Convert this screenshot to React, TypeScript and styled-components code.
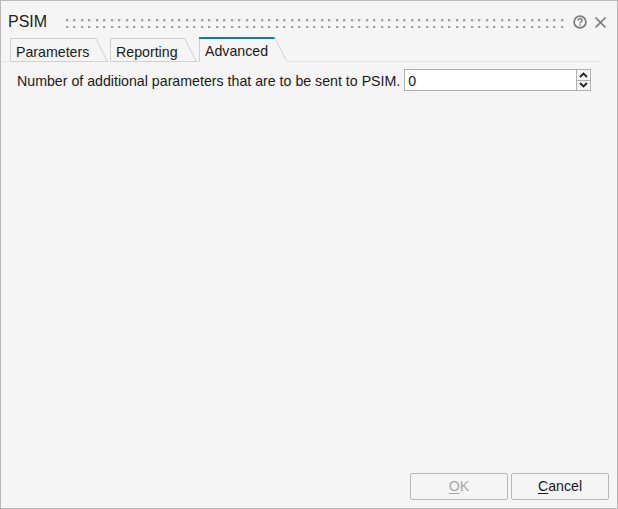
import React from 'react';
import styled, { createGlobalStyle } from 'styled-components';

const GlobalStyle = createGlobalStyle`
	html, body {
		margin: 0;
		padding: 0;
		background: #f5f5f5;
	}
`;

const Dialog = styled.div`
	box-sizing: border-box;
	width: 618px;
	height: 509px;
	display: flex;
	flex-direction: column;
	background: #f5f5f5;
	border: 1px solid #b9b9b9;
	font-family: 'Liberation Sans', Arial, sans-serif;
	font-size: 14.2px;
	color: #1a1a1a;
`;

const TitleBar = styled.div`
	height: 36px;
	display: flex;
	align-items: center;
	padding: 6px 10px 0 7px;
	box-sizing: border-box;
`;

const Title = styled.div`
	font-size: 16px;
	color: #222;
	width: 58px;
`;

const Grip = styled.div`
	flex: 1;
	height: 11px;
	margin-right: 2px;
	background-image:
		radial-gradient(circle at 1px 1px, #a0a0a0 1.3px, #c8c8c8 1.5px, transparent 1.7px),
		radial-gradient(circle at 1px 1px, #a0a0a0 1.3px, #c8c8c8 1.5px, transparent 1.7px);
	background-size: 15px 7px;
	background-position: 0 2px, 7px 2px;
`;

const IconButton = styled.button`
	border: 0;
	background: none;
	padding: 0;
	display: flex;
	margin-left: 7px;
`;

const TabStrip = styled.div`
	box-sizing: border-box;
	display: flex;
	align-items: flex-end;
	height: 25px;
	padding-left: 9px;
	border-bottom: 1px solid #e6e6e6;
	margin-right: 17px;
`;

const Tab = styled.div<{ $active?: boolean; $width: number }>`
	position: relative;
	box-sizing: border-box;
	width: ${(p) => p.$width}px;
	height: ${(p) => (p.$active ? 25 : 23)}px;
	margin-right: ${(p) => (p.$active ? 0 : 2)}px;
	margin-bottom: ${(p) => (p.$active ? -1 : 0)}px;
	padding: 6px 0 0 5px;
	border-left: 1px solid #d0d0d0;
	line-height: 16px;
	color: #1a1a1a;
	&::before {
		content: '';
		position: absolute;
		top: 0;
		left: -1px;
		right: 12px;
		border-top: ${(p) => (p.$active ? '2px solid #0b7fa5' : '1px solid #d0d0d0')};
	}
	&::after {
		content: '';
		position: absolute;
		left: 0;
		right: 0;
		bottom: ${(p) => (p.$active ? 0 : -1)}px;
		border-bottom: 1px solid ${(p) => (p.$active ? '#f5f5f5' : '#d0d0d0')};
	}
`;

const TabEdge = styled.svg`
	position: absolute;
	right: 0;
	top: 0;
	z-index: 1;
`;

const Body = styled.div`
	flex: 1;
	padding: 7px 26px 0 16px;
`;

const Row = styled.div`
	display: flex;
	align-items: center;
	height: 22px;
`;

const Label = styled.label`
	white-space: nowrap;
	margin-right: 4px;
	padding-top: 2px;
`;

const NumberField = styled.div`
	flex: 1;
	height: 22px;
	box-sizing: border-box;
	border: 1px solid #b0b0b0;
	background: #fff;
	padding-left: 3px;
	line-height: 22px;
	color: #1a1a1a;
`;

const Spinner = styled.div`
	display: flex;
	flex-direction: column;
	width: 14px;
	height: 22px;
`;

const SpinButton = styled.div`
	flex: 1;
	display: flex;
	align-items: center;
	justify-content: center;
	box-sizing: border-box;
	background: #f5f5f5;
	border: 1px solid #b0b0b0;
	border-left: 0;
	& + & {
		border-top: 0;
	}
`;

const Footer = styled.div`
	display: flex;
	justify-content: flex-end;
	gap: 3px;
	padding: 0 8px 8px 0;
`;

const Button = styled.button`
	box-sizing: border-box;
	width: 98px;
	height: 27px;
	padding: 0 0 2px;
	background: #f5f5f5;
	border: 1px solid #b9b9b9;
	border-radius: 2px;
	font: inherit;
	color: ${(p) => (p.disabled ? '#a8a8a8' : '#1a1a1a')};
	u {
		text-underline-offset: 2px;
	}
`;

const tabs = [
	{ name: 'Parameters', width: 98 },
	{ name: 'Reporting', width: 87 },
	{ name: 'Advanced', width: 88, active: true }
];

const App = () => (
	<>
		<GlobalStyle />
		<Dialog>
			<TitleBar>
				<Title>PSIM</Title>
				<Grip />
				<IconButton>
					<svg width="14" height="14" viewBox="0 0 14 14" fill="none" stroke="#7a7a7a">
						<circle cx="7" cy="7" r="5.9" strokeWidth="1.7" />
						<path d="M5 5.6C5 4.4 5.9 3.8 7 3.8s2 .7 2 1.7C9 7 7 7 7 8.5" strokeWidth="1.5" />
						<path d="M7 9.4v1.3" strokeWidth="1.5" />
					</svg>
				</IconButton>
				<IconButton>
					<svg width="13" height="13" viewBox="0 0 13 13" stroke="#7a7a7a" strokeWidth="1.7">
						<path d="M1.5 1.5l10 10M11.5 1.5l-10 10" />
					</svg>
				</IconButton>
			</TitleBar>
			<TabStrip>
				{tabs.map((tab) => (
					<Tab key={tab.name} $active={tab.active} $width={tab.width}>
						{tab.name}
						<TabEdge width="13" height="24" viewBox="0 0 13 24" fill="none" stroke="#d0d0d0">
							<path d="M0.5 0L12.5 24" />
						</TabEdge>
					</Tab>
				))}
			</TabStrip>
			<Body>
				<Row>
					<Label>Number of additional parameters that are to be sent to PSIM.</Label>
					<NumberField>0</NumberField>
					<Spinner>
						<SpinButton>
							<svg width="9" height="6" viewBox="0 0 9 6" fill="none" stroke="#222" strokeWidth="1.8">
								<path d="M1 5l3.5-3.5L8 5" />
							</svg>
						</SpinButton>
						<SpinButton>
							<svg width="9" height="6" viewBox="0 0 9 6" fill="none" stroke="#222" strokeWidth="1.8">
								<path d="M1 1l3.5 3.5L8 1" />
							</svg>
						</SpinButton>
					</Spinner>
				</Row>
			</Body>
			<Footer>
				<Button disabled>
					<u>O</u>K
				</Button>
				<Button>
					<u>C</u>ancel
				</Button>
			</Footer>
		</Dialog>
	</>
);

export default App;
